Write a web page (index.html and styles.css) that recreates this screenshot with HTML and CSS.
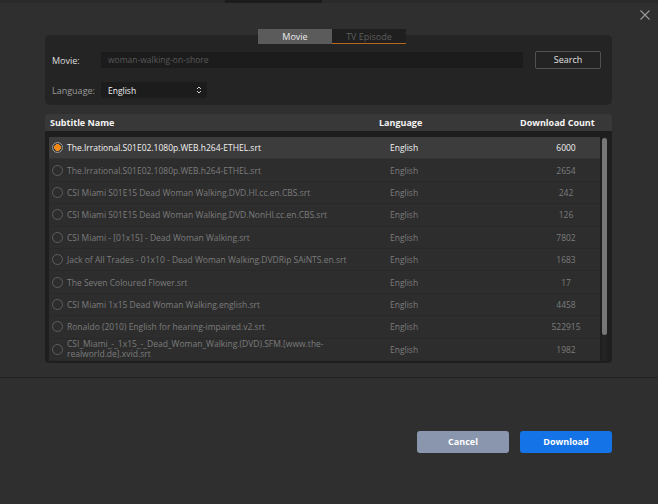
FILE: index.html
```html
<!DOCTYPE html>
<html>
<head>
<meta charset="utf-8">
<link rel="stylesheet" href="styles.css">
</head>
<body>
<div class="topstrip"><div class="topstrip-tab"></div></div>
<div class="dialog">
  <div class="closebar">
    <svg class="close" width="10" height="10" viewBox="0 0 10 10"><path d="M0.5 0.5L9.5 9.5M9.5 0.5L0.5 9.5" stroke="#9a9a9a" stroke-width="1.1" fill="none"/></svg>
  </div>
  <div class="tabs">
    <div class="tab active">Movie</div>
    <div class="tab inactive">TV Episode</div>
  </div>
  <div class="panel">
    <div class="prow">
      <span class="label label-movie">Movie:</span>
      <div class="input">woman-walking-on-shore</div>
      <div class="search">Search</div>
    </div>
    <div class="prow prow2">
      <span class="label label-lang">Language:</span>
      <div class="select">
        <span>English</span>
        <svg width="6" height="8" viewBox="0 0 6 8"><path d="M1 3L3 1L5 3M1 5L3 7L5 5" stroke="#d0d0d0" stroke-width="1" fill="none"/></svg>
      </div>
    </div>
  </div>
  <div class="table">
    <div class="thead">
      <span class="th th-name">Subtitle Name</span>
      <span class="th th-lang">Language</span>
      <span class="th th-count">Download Count</span>
    </div>
    <div class="tbody">
      <div class="rows">
        <div class="row selected"><span class="radio"></span><span class="name">The.Irrational.S01E02.1080p.WEB.h264-ETHEL.srt</span><span class="lang">English</span><span class="count">6000</span></div>
        <div class="row"><span class="radio"></span><span class="name">The.Irrational.S01E02.1080p.WEB.h264-ETHEL.srt</span><span class="lang">English</span><span class="count">2654</span></div>
        <div class="row"><span class="radio"></span><span class="name">CSI Miami S01E15 Dead Woman Walking.DVD.HI.cc.en.CBS.srt</span><span class="lang">English</span><span class="count">242</span></div>
        <div class="row"><span class="radio"></span><span class="name">CSI Miami S01E15 Dead Woman Walking.DVD.NonHI.cc.en.CBS.srt</span><span class="lang">English</span><span class="count">126</span></div>
        <div class="row"><span class="radio"></span><span class="name">CSI Miami - [01x15] - Dead Woman Walking.srt</span><span class="lang">English</span><span class="count">7802</span></div>
        <div class="row"><span class="radio"></span><span class="name">Jack of All Trades - 01x10 - Dead Woman Walking.DVDRip SAiNTS.en.srt</span><span class="lang">English</span><span class="count">1683</span></div>
        <div class="row"><span class="radio"></span><span class="name">The Seven Coloured Flower.srt</span><span class="lang">English</span><span class="count">17</span></div>
        <div class="row"><span class="radio"></span><span class="name">CSI Miami 1x15 Dead Woman Walking.english.srt</span><span class="lang">English</span><span class="count">4458</span></div>
        <div class="row"><span class="radio"></span><span class="name">Ronaldo (2010) English for hearing-impaired.v2.srt</span><span class="lang">English</span><span class="count">522915</span></div>
        <div class="row"><span class="radio"></span><span class="name wrap">CSI_Miami_-_1x15_-_Dead_Woman_Walking.(DVD).SFM.[www.the-realworld.de].xvid.srt</span><span class="lang">English</span><span class="count">1982</span></div>
      </div>
      <div class="scrollbar"><div class="thumb"></div></div>
    </div>
  </div>
  <div class="divider"></div>
  <div class="footer">
    <div class="btn cancel">Cancel</div>
    <div class="btn download">Download</div>
  </div>
</div>
</body>
</html>
```
FILE: styles.css
```css
* { box-sizing: border-box; }
html, body { margin: 0; padding: 0; }
body {
  width: 658px;
  height: 504px;
  background: #2f2f2f;
  font-family: "Open Sans", "Liberation Sans", sans-serif;
  font-size: 8.5px;
  color: #dcdcdc;
  overflow: hidden;
}
.topstrip {
  height: 3px;
  background: #2a2a2a;
  padding-left: 225px;
}
.topstrip-tab {
  width: 97px;
  height: 3px;
  background: #1c1c1c;
}
.dialog {
  height: 501px;
  display: flex;
  flex-direction: column;
}
.closebar {
  height: 26px;
  display: flex;
  justify-content: flex-end;
  align-items: flex-start;
  padding: 7px 8px 0 0;
}
.tabs {
  display: flex;
  justify-content: center;
  padding-left: 6px;
  height: 15px;
  position: relative;
  z-index: 1;
}
.tab {
  width: 74px;
  height: 15px;
  line-height: 15px;
  text-align: center;
  font-size: 9px;
}
.tab.active { background: #5b5b5b; color: #ececec; }
.tab.inactive {
  background: #1f1f1f;
  color: #5c5c5c;
  border-bottom: 1.5px solid #b8681c;
}
.panel {
  margin: -9px 46px 0 45px;
  height: 70px;
  background: #242424;
  border-radius: 5px;
  padding: 16px 11px 0 7px;
}
.prow {
  display: flex;
  align-items: center;
  height: 18px;
}
.prow2 { margin-top: 12px; }
.label { width: 49px; flex: none; font-size: 9px; }
.label-movie { color: #dedede; }
.label-lang { color: #9a9a9a; }
.input {
  width: 423px;
  height: 16px;
  line-height: 16px;
  background: #1c1c1c;
  border-radius: 2px;
  color: #585858;
  padding-left: 7px;
}
.search {
  margin-left: 12px;
  width: 66px;
  height: 18px;
  line-height: 16px;
  text-align: center;
  border: 1px solid #505050;
  border-radius: 2px;
  background: #232323;
  color: #e0e0e0;
  font-size: 9px;
}
.select {
  width: 106px;
  height: 16px;
  background: #1c1c1c;
  border-radius: 2px;
  display: flex;
  align-items: center;
  justify-content: space-between;
  padding: 0 5px 0 7px;
  color: #f2f2f2;
}
.table {
  margin: 9px 46px 0 45px;
  height: 249px;
  display: flex;
  flex-direction: column;
}
.thead {
  height: 17px;
  flex: none;
  background: #383838;
  border-radius: 4px 4px 0 0;
  display: flex;
  align-items: center;
  font-weight: bold;
  color: #f4f4f4;
  font-size: 9px;
}
.th-name { margin-left: 5px; width: 329px; }
.th-lang { width: 141px; }
.tbody {
  flex: 1;
  background: #1e1e1e;
  border-radius: 0 0 4px 4px;
  padding: 6px 5px 2px 4px;
  display: flex;
  gap: 2px;
}
.rows {
  width: 551px;
  display: flex;
  flex-direction: column;
}
.row {
  height: 22.4px;
  flex: none;
  display: grid;
  grid-template-columns: 11px 319px 138px 1fr;
  column-gap: 4px;
  padding-left: 3px;
  align-items: center;
  background: #2d2d2d;
  border-bottom: 1px solid #292929;
  color: #7c7c7c;
}
.row.selected {
  background: #3c3c3c;
  color: #f2f2f2;
  border-bottom-color: #333;
}
.radio {
  width: 11px;
  height: 11px;
  border-radius: 50%;
  border: 1px solid #5e5e5e;
}
.row.selected .radio {
  border: 1.5px solid #9a9a9a;
  background: radial-gradient(circle, #f08a14 0 3.2px, transparent 3.6px);
}
.name { white-space: nowrap; }
.name.wrap { white-space: normal; max-width: 268px; line-height: 10px; }
.count { text-align: center; }
.scrollbar {
  width: 5px;
  padding-top: 1px;
  background: #232323;
}
.thumb {
  height: 197px;
  background: #777;
  border-radius: 3px;
}
.divider {
  margin-top: 14px;
  height: 1px;
  background: #222;
}
.footer {
  display: flex;
  justify-content: flex-end;
  gap: 11px;
  padding: 53px 46px 0 0;
}
.btn {
  width: 92px;
  height: 22px;
  line-height: 22px;
  text-align: center;
  border-radius: 3px;
  color: #fff;
  font-weight: bold;
  font-size: 9px;
}
.cancel { background: #8996ae; }
.download { background: #1473e6; }
```
